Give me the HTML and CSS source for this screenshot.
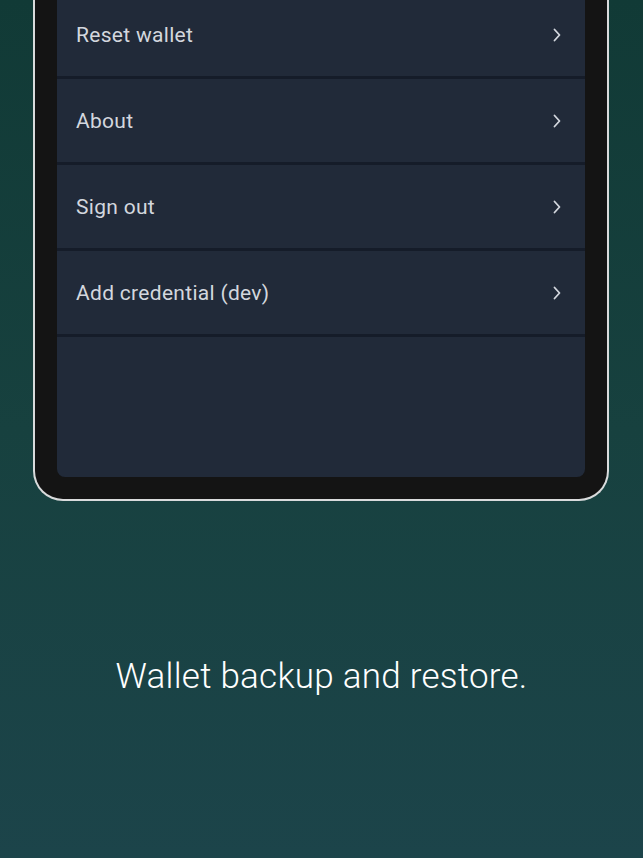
FILE: index.html
```html
<!DOCTYPE html>
<html>
<head>
<meta charset="utf-8">
<link rel="stylesheet" href="styles.css">
</head>
<body>
<div class="page">
  <div class="device">
    <div class="screen">
      <div class="row"><span>Reset wallet</span><svg class="chev" viewBox="0 0 8 14" width="8" height="14"><path d="M1.5 1.5 L6.5 7 L1.5 12.5" fill="none" stroke="#d3d7de" stroke-width="1.8" stroke-linecap="round" stroke-linejoin="round"/></svg></div>
      <div class="row"><span>About</span><svg class="chev" viewBox="0 0 8 14" width="8" height="14"><path d="M1.5 1.5 L6.5 7 L1.5 12.5" fill="none" stroke="#d3d7de" stroke-width="1.8" stroke-linecap="round" stroke-linejoin="round"/></svg></div>
      <div class="row"><span>Sign out</span><svg class="chev" viewBox="0 0 8 14" width="8" height="14"><path d="M1.5 1.5 L6.5 7 L1.5 12.5" fill="none" stroke="#d3d7de" stroke-width="1.8" stroke-linecap="round" stroke-linejoin="round"/></svg></div>
      <div class="row"><span>Add credential (dev)</span><svg class="chev" viewBox="0 0 8 14" width="8" height="14"><path d="M1.5 1.5 L6.5 7 L1.5 12.5" fill="none" stroke="#d3d7de" stroke-width="1.8" stroke-linecap="round" stroke-linejoin="round"/></svg></div>
    </div>
  </div>
  <p class="caption">Wallet backup and restore.</p>
</div>
</body>
</html>
```

FILE: styles.css
```css
html, body {
  margin: 0;
  padding: 0;
}
body {
  width: 643px;
  height: 858px;
  overflow: hidden;
  background: linear-gradient(180deg, #113a36 0%, #17413f 50%, #1c444a 100%);
  font-family: Roboto, "Liberation Sans", sans-serif;
}
.page {
  display: flex;
  flex-direction: column;
  align-items: center;
}
.device {
  margin-top: -31px;
  margin-right: 1px;
  width: 576px;
  height: 532px;
  border: 2px solid #d9dbdc;
  border-top: none;
  border-radius: 0 0 30px 30px;
  background: #141414;
  padding: 24px 22px 22px 22px;
  box-sizing: border-box;
  display: flex;
}
.screen {
  flex: 1;
  background: #212a39;
  border-radius: 8px;
  display: flex;
  flex-direction: column;
}
.row {
  height: 83px;
  border-bottom: 3px solid #151c29;
  display: flex;
  align-items: center;
  justify-content: space-between;
  padding: 0 24px 0 19px;
  color: #d3d7de;
  font-size: 21px;
  letter-spacing: 0.3px;
  flex-shrink: 0;
}
.chev {
  display: block;
}
.caption {
  margin: 156px 0 0 0;
  color: #ffffff;
  font-size: 35px;
  font-weight: 300;
  letter-spacing: 0.25px;
  line-height: 40px;
  text-align: center;
}
```
